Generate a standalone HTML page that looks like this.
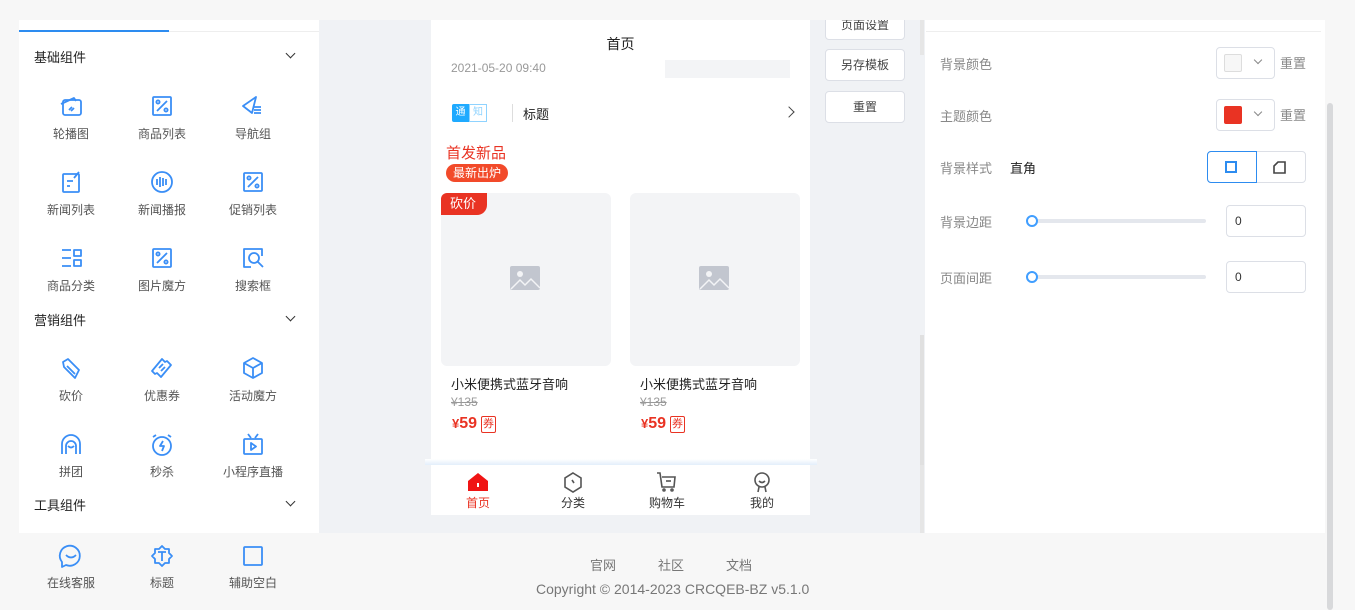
<!DOCTYPE html><html><head><meta charset="utf-8"><style>
*{margin:0;padding:0;box-sizing:border-box}
body{width:1355px;height:610px;overflow:hidden;background:#f7f7f7;font-family:"Liberation Sans","Noto Sans CJK SC",sans-serif;position:relative;font-size:12px;color:#333}
.a{position:absolute}
.lbl{position:absolute;width:90px;text-align:center;font-size:12px;color:#555}
.hd{position:absolute;left:34px;font-size:13px;color:#222}
.chev{position:absolute;left:287px;width:7px;height:7px;border-right:1.5px solid #333;border-bottom:1.5px solid #333;transform:rotate(45deg)}
.btn{position:absolute;left:825px;width:80px;height:32px;background:#fff;border:1px solid #dcdfe6;border-radius:4px;text-align:center;line-height:30px;font-size:12px;color:#444}
.rl{position:absolute;left:940px;font-size:13px;color:#888}
.card{position:absolute;top:193px;width:170px;height:173px;background:#f3f4f6;border-radius:6px}
.nm{position:absolute;font-size:13px;color:#222}
.op{position:absolute;font-size:12px;color:#999;text-decoration:line-through}
.pr{position:absolute;color:#e93323;font-weight:bold;font-size:16px}
.q{display:inline-block;border:1px solid #e93323;border-radius:2px;font-size:11px;font-weight:normal;line-height:15px;padding:0 1px;margin-left:4px;vertical-align:1px}
.tb{position:absolute;top:494px;width:60px;text-align:center;font-size:12px;color:#333}
</style></head><body>
<div class="a" style="left:19px;top:20px;width:300px;height:513px;background:#fff"></div>
<div class="a" style="left:19px;top:31px;width:300px;height:1px;background:#eee"></div>
<div class="a" style="left:19px;top:30px;width:150px;height:2px;background:#2d8cf0"></div>
<div class="hd" style="top:47px">基础组件</div><div class="chev" style="top:50px"></div>
<div class="hd" style="top:310px">营销组件</div><div class="chev" style="top:313px"></div>
<div class="hd" style="top:495px">工具组件</div><div class="chev" style="top:498px"></div>

<svg class="a" style="left:0;top:0" width="320" height="610" fill="none" stroke="#3a8ef6" stroke-width="1.8" stroke-linejoin="round">
<rect x="63" y="100" width="18" height="15" rx="2"/><path d="M61 104l13-6 2 3"/><path d="M69 110l3-3M71 111l3-3"/>
<rect x="153" y="97" width="18" height="18" rx="1"/><path d="M157 111l10-10"/><circle cx="158" cy="102" r="1.6"/><circle cx="166" cy="110" r="1.6"/>
<path d="M243 106l13-9-4 16z"/><path d="M254 107h7M254 110h7M254 113h7"/>
<rect x="63" y="174" width="16" height="18" rx="1"/><path d="M67 181h6M67 186h3"/><path d="M74 178l5-6"/>
<circle cx="162" cy="182" r="10"/><path d="M157 179v6M160 177v10M163 178v8M166 179v6"/>
<rect x="244" y="173" width="18" height="18" rx="1"/><path d="M248 187l10-10"/><circle cx="249" cy="178" r="1.6"/><circle cx="257" cy="186" r="1.6"/>
<path d="M62 250h9M62 258h9M62 266h9"/><rect x="74" y="250" width="7" height="6"/><rect x="74" y="260" width="7" height="6"/>
<rect x="153" y="249" width="18" height="18" rx="1"/><path d="M157 263l10-10"/><circle cx="158" cy="254" r="1.6"/><circle cx="166" cy="262" r="1.6"/>
<path d="M262 256v-7h-18v18h7"/><circle cx="254" cy="258" r="5"/><path d="M258 262l5 5"/>
<path d="M63 362l5-3 11 11-4 8-11-11z"/><path d="M67 366l8 8"/>
<path d="M152 371l10-12 3 3 2-1 4 4-10 12-4-4-2 1z"/><path d="M159 368l4-4M161 371l4-4"/>
<path d="M253 358l9 5v10l-9 5-9-5v-10z"/><path d="M244 363l9 5 9-5M253 368v10"/>
<path d="M62 454v-10a9 9 0 0 1 18 0v10"/><path d="M66 454v-8a5 5 0 0 1 10 0v8"/><path d="M68 446q3 3 6 0"/>
<circle cx="162" cy="446" r="9"/><path d="M163 441l-3 5h4l-2 5"/><path d="M153 437l3-2M171 437l-3-2"/>
<rect x="244" y="439" width="18" height="15" rx="1"/><path d="M248 434l3 4M258 434l-3 4"/><path d="M251 443v7l5-3.5z"/>
<path d="M62 562a10 10 0 1 1 4 3l-4 2z"/><path d="M66 555q5 5 10 0"/>
<path d="M162 546l3 3h4v4l3 3-3 3v4h-4l-3 3-3-3h-4v-4l-3-3 3-3v-4h4z"/><path d="M158 552h8M162 552v9"/>
<rect x="244" y="547" width="18" height="18" rx="1"/>
</svg>
<div class="lbl" style="left:26px;top:125px">轮播图</div><div class="lbl" style="left:117px;top:125px">商品列表</div><div class="lbl" style="left:208px;top:125px">导航组</div>
<div class="lbl" style="left:26px;top:201px">新闻列表</div><div class="lbl" style="left:117px;top:201px">新闻播报</div><div class="lbl" style="left:208px;top:201px">促销列表</div>
<div class="lbl" style="left:26px;top:277px">商品分类</div><div class="lbl" style="left:117px;top:277px">图片魔方</div><div class="lbl" style="left:208px;top:277px">搜索框</div>
<div class="lbl" style="left:26px;top:387px">砍价</div><div class="lbl" style="left:117px;top:387px">优惠券</div><div class="lbl" style="left:208px;top:387px">活动魔方</div>
<div class="lbl" style="left:26px;top:463px">拼团</div><div class="lbl" style="left:117px;top:463px">秒杀</div><div class="lbl" style="left:208px;top:463px">小程序直播</div>
<div class="lbl" style="left:26px;top:574px">在线客服</div><div class="lbl" style="left:117px;top:574px">标题</div><div class="lbl" style="left:208px;top:574px">辅助空白</div>

<div class="a" style="left:319px;top:20px;width:606px;height:513px;background:#f0f2f5"></div>
<div class="a" style="left:431px;top:20px;width:379px;height:495px;background:#fff"></div>
<div class="a" style="left:437px;top:18px;width:10px;height:2px;background:#222"></div>
<div class="a" style="left:597px;top:18px;width:44px;height:2px;background:#222"></div>
<div class="a" style="left:742px;top:18px;width:36px;height:2px;background:#222"></div>
<div class="a" style="left:431px;top:34px;width:379px;text-align:center;font-size:14px;color:#222">首页</div>
<div class="a" style="left:451px;top:61px;font-size:12px;color:#999">2021-05-20 09:40</div>
<div class="a" style="left:665px;top:60px;width:125px;height:18px;background:#f3f4f6"></div>
<div class="a" style="left:452px;top:104px;width:17px;height:18px;background:#1faaff;color:#fff;font-size:10px;line-height:18px;text-align:center;border-radius:2px 0 0 2px">通</div>
<div class="a" style="left:469px;top:104px;width:18px;height:18px;border:1px solid #8fd3ff;color:#8fd3ff;font-size:10px;line-height:16px;text-align:center">知</div>
<div class="a" style="left:512px;top:104px;width:1px;height:18px;background:#ddd"></div>
<div class="a" style="left:523px;top:104px;font-size:13px;color:#222">标题</div>
<div class="a" style="left:785px;top:108px;width:8px;height:8px;border-right:1.5px solid #444;border-top:1.5px solid #444;transform:rotate(45deg)"></div>
<div class="a" style="left:446px;top:142px;font-size:15px;color:#e93323">首发新品</div>
<div class="a" style="left:446px;top:164px;width:62px;height:18px;background:#f24a2a;border-radius:9px;color:#fff;font-size:12px;text-align:center;line-height:18px">最新出炉</div>
<div class="card" style="left:441px"></div><div class="card" style="left:630px"></div>
<div class="a" style="left:441px;top:193px;width:46px;height:22px;background:#e93323;border-radius:6px 0 10px 0;color:#fff;font-size:13px;line-height:22px;padding-left:9px">砍价</div>
<svg class="a" style="left:510px;top:266px" width="30" height="25"><rect width="30" height="24" rx="2" fill="#c2c6cf"/><circle cx="10" cy="8" r="3" fill="#f3f4f6"/><path d="M1 23l9-9 5 5 6-6 9 9" fill="none" stroke="#f3f4f6" stroke-width="1.5"/></svg>
<svg class="a" style="left:699px;top:266px" width="30" height="25"><rect width="30" height="24" rx="2" fill="#c2c6cf"/><circle cx="10" cy="8" r="3" fill="#f3f4f6"/><path d="M1 23l9-9 5 5 6-6 9 9" fill="none" stroke="#f3f4f6" stroke-width="1.5"/></svg>
<div class="nm" style="left:451px;top:374px">小米便携式蓝牙音响</div><div class="nm" style="left:640px;top:374px">小米便携式蓝牙音响</div>
<div class="op" style="left:451px;top:395px">¥135</div><div class="op" style="left:640px;top:395px">¥135</div>
<div class="pr" style="left:452px;top:415px"><span style="font-size:13px">¥</span>59<span class="q">券</span></div>
<div class="pr" style="left:641px;top:415px"><span style="font-size:13px">¥</span>59<span class="q">券</span></div>
<div class="a" style="left:425px;top:459px;width:392px;height:6px;background:linear-gradient(#fff,#e3eefb)"></div>
<div class="a" style="left:431px;top:465px;width:379px;height:50px;background:#fff"></div>
<svg class="a" style="left:466px;top:471px" width="24" height="22"><path d="M2 10l10-8 10 8v10H2z" fill="#f01414"/><rect x="11" y="12" width="2" height="4" fill="#fff"/></svg>
<svg class="a" style="left:561px;top:471px" width="24" height="22" fill="none" stroke="#555" stroke-width="1.6"><path d="M12 2l8 5v9l-8 5-8-5V7z"/><path d="M11 9l2 3"/></svg>
<svg class="a" style="left:655px;top:471px" width="24" height="22" fill="none" stroke="#555" stroke-width="1.6"><path d="M2 2h3l2 14h12l1-10H7"/><circle cx="9" cy="19" r="1"/><circle cx="17" cy="19" r="1"/><path d="M11 10h5"/></svg>
<svg class="a" style="left:750px;top:471px" width="24" height="22" fill="none" stroke="#555" stroke-width="1.6"><circle cx="12" cy="9" r="7"/><path d="M9 10q3 3 6 0M9 16l-1 5M15 16l1 5"/></svg>
<div class="tb" style="left:448px;color:#e93323">首页</div><div class="tb" style="left:543px">分类</div><div class="tb" style="left:637px">购物车</div><div class="tb" style="left:732px">我的</div>
<div class="btn" style="top:6px;height:34px;line-height:36px">页面设置</div>
<div class="btn" style="top:49px">另存模板</div>
<div class="btn" style="top:91px">重置</div>
<div class="a" style="left:920px;top:335px;width:4px;height:130px;background:#e0e0e0"></div>
<div class="a" style="left:920px;top:465px;width:4px;height:68px;background:#e6e6e6"></div>
<div class="a" style="left:920px;top:20px;width:4px;height:35px;background:#e6e6e6"></div>
<div class="a" style="left:0;top:0;width:1355px;height:20px;background:#f7f7f7"></div>

<div class="a" style="left:925px;top:20px;width:400px;height:513px;background:#fff"></div>
<div class="a" style="left:926px;top:31px;width:395px;height:1px;background:#eee"></div>
<div class="a" style="left:1327px;top:103px;width:6px;height:507px;background:#d8d9db;border-radius:3px"></div>
<div class="rl" style="top:54px">背景颜色</div><div class="rl" style="top:106px">主题颜色</div>
<div class="rl" style="top:158px">背景样式</div><div class="a" style="left:1010px;top:158px;font-size:13px;color:#222">直角</div>
<div class="rl" style="top:212px">背景边距</div><div class="rl" style="top:268px">页面间距</div>
<div class="a" style="left:1216px;top:47px;width:59px;height:32px;border:1px solid #dcdfe6;border-radius:4px"></div>
<div class="a" style="left:1224px;top:54px;width:18px;height:18px;border:1px solid #ddd;background:#f7f7f7;border-radius:2px"></div>
<div class="a" style="left:1216px;top:99px;width:59px;height:32px;border:1px solid #dcdfe6;border-radius:4px"></div>
<div class="a" style="left:1224px;top:106px;width:18px;height:18px;background:#e93323;border-radius:2px"></div>
<div class="a" style="left:1255px;top:57px;width:6px;height:6px;border-right:1px solid #888;border-bottom:1px solid #888;transform:rotate(45deg)"></div>
<div class="a" style="left:1255px;top:109px;width:6px;height:6px;border-right:1px solid #888;border-bottom:1px solid #888;transform:rotate(45deg)"></div>
<div class="a" style="left:1280px;top:53px;font-size:13px;color:#888">重置</div><div class="a" style="left:1280px;top:105px;font-size:13px;color:#888">重置</div>
<div class="a" style="left:1207px;top:151px;width:99px;height:32px;border:1px solid #dcdfe6;border-radius:4px"></div>
<div class="a" style="left:1207px;top:151px;width:50px;height:32px;border:1px solid #2d8cf0;border-radius:4px 0 0 4px"></div>
<div class="a" style="left:1225px;top:161px;width:12px;height:12px;border:2px solid #2d8cf0"></div>
<svg class="a" style="left:1273px;top:161px" width="14" height="14"><path d="M1 12V5l4-4h7v11z" fill="none" stroke="#444" stroke-width="1.6"/></svg>
<div class="a" style="left:1031px;top:219px;width:175px;height:4px;background:#e4e7ed;border-radius:2px"></div>
<div class="a" style="left:1031px;top:275px;width:175px;height:4px;background:#e4e7ed;border-radius:2px"></div>
<div class="a" style="left:1026px;top:215px;width:12px;height:12px;border:2px solid #409eff;background:#fff;border-radius:50%"></div>
<div class="a" style="left:1026px;top:271px;width:12px;height:12px;border:2px solid #409eff;background:#fff;border-radius:50%"></div>
<div class="a" style="left:1226px;top:205px;width:80px;height:32px;border:1px solid #dcdfe6;border-radius:4px;padding-left:8px;line-height:30px;font-size:12px">0</div>
<div class="a" style="left:1226px;top:261px;width:80px;height:32px;border:1px solid #dcdfe6;border-radius:4px;padding-left:8px;line-height:30px;font-size:12px">0</div>

<div class="a" style="left:590px;top:555px;font-size:13px;color:#777">官网</div>
<div class="a" style="left:658px;top:555px;font-size:13px;color:#777">社区</div>
<div class="a" style="left:726px;top:555px;font-size:13px;color:#777">文档</div>
<div class="a" style="left:536px;top:581px;font-size:14px;color:#777">Copyright © 2014-2023 CRCQEB-BZ v5.1.0</div>
</body></html>
